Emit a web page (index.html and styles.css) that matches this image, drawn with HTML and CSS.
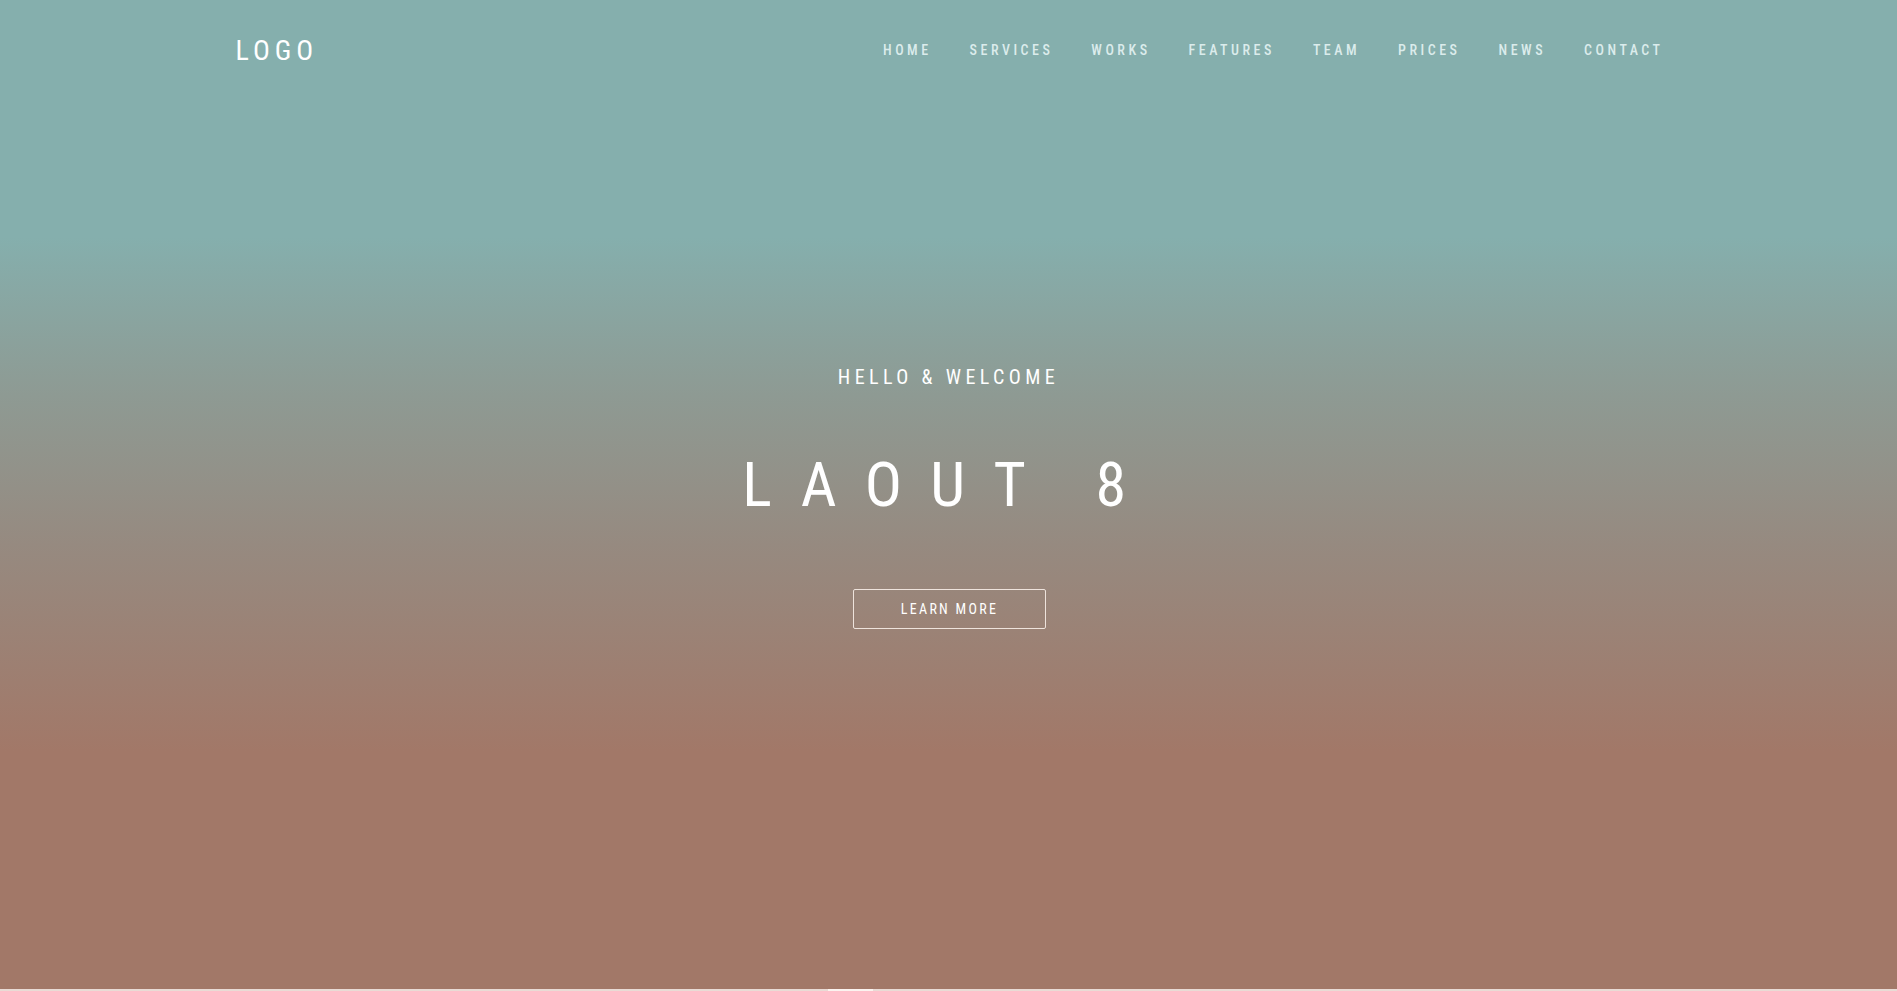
FILE: index.html
```html
<!DOCTYPE html>
<html lang="en">
<head>
<meta charset="utf-8">
<title>Laout 8</title>
<link rel="stylesheet" href="styles.css">
</head>
<body>
<section class="hero">
  <header class="topbar">
    <a class="logo" href="#">LOGO</a>
    <nav class="nav">
      <a href="#">HOME</a>
      <a href="#">SERVICES</a>
      <a href="#">WORKS</a>
      <a href="#">FEATURES</a>
      <a href="#">TEAM</a>
      <a href="#">PRICES</a>
      <a href="#">NEWS</a>
      <a href="#">CONTACT</a>
    </nav>
  </header>
  <div class="intro">
    <p class="kicker">HELLO &amp; WELCOME</p>
    <h1 class="title">LAOUT 8</h1>
    <a class="btn" href="#">LEARN MORE</a>
  </div>
</section>
<div class="next"><span class="next-mark"></span></div>
</body>
</html>
```

FILE: styles.css
```css
html, body {
  margin: 0;
  padding: 0;
}
body {
  height: 991px;
  overflow: hidden;
  font-family: "Roboto Condensed", Roboto, sans-serif;
  background: #eaddd7;
}
a { text-decoration: none; }
.hero {
  height: 989px;
  display: flex;
  flex-direction: column;
  background: linear-gradient(180deg, #85afad 0%, #85afad 24%, #8e9a93 40%, #968a80 55%, #a27868 76%, #a27868 100%);
}
.topbar {
  width: 1428px;
  padding-left: 2px;
  margin: 0 auto;
  height: 100px;
  display: flex;
  align-items: center;
  justify-content: space-between;
}
.logo {
  color: #fff;
  font-size: 28px;
  letter-spacing: 5px;
}
.nav {
  display: flex;
  gap: 38px;
}
.nav a {
  color: rgba(235, 248, 248, 0.85);
  font-size: 14px;
  font-weight: 500;
  letter-spacing: 3.5px;
}
.intro {
  display: flex;
  flex-direction: column;
  align-items: center;
  margin-top: 265px;
}
.kicker {
  margin: 0;
  color: #fff;
  font-size: 20px;
  letter-spacing: 4.4px;
}
.title {
  margin: 65px 0 0;
  color: #fff;
  font-size: 62px;
  font-weight: 400;
  letter-spacing: 28.4px;
  line-height: 1;
}
.btn {
  margin-top: 73px;
  margin-left: 2px;
  width: 191px;
  height: 38px;
  border: 1px solid #eee3dc;
  border-radius: 2px;
  display: flex;
  align-items: center;
  justify-content: center;
  color: #fff;
  font-size: 14px;
  font-weight: 400;
  letter-spacing: 2.3px;
}
.next {
  height: 2px;
  background: #e9dbd5;
  display: flex;
}
.next-mark {
  margin-left: 828px;
  width: 45px;
  background: #fbf3ef;
}
```
